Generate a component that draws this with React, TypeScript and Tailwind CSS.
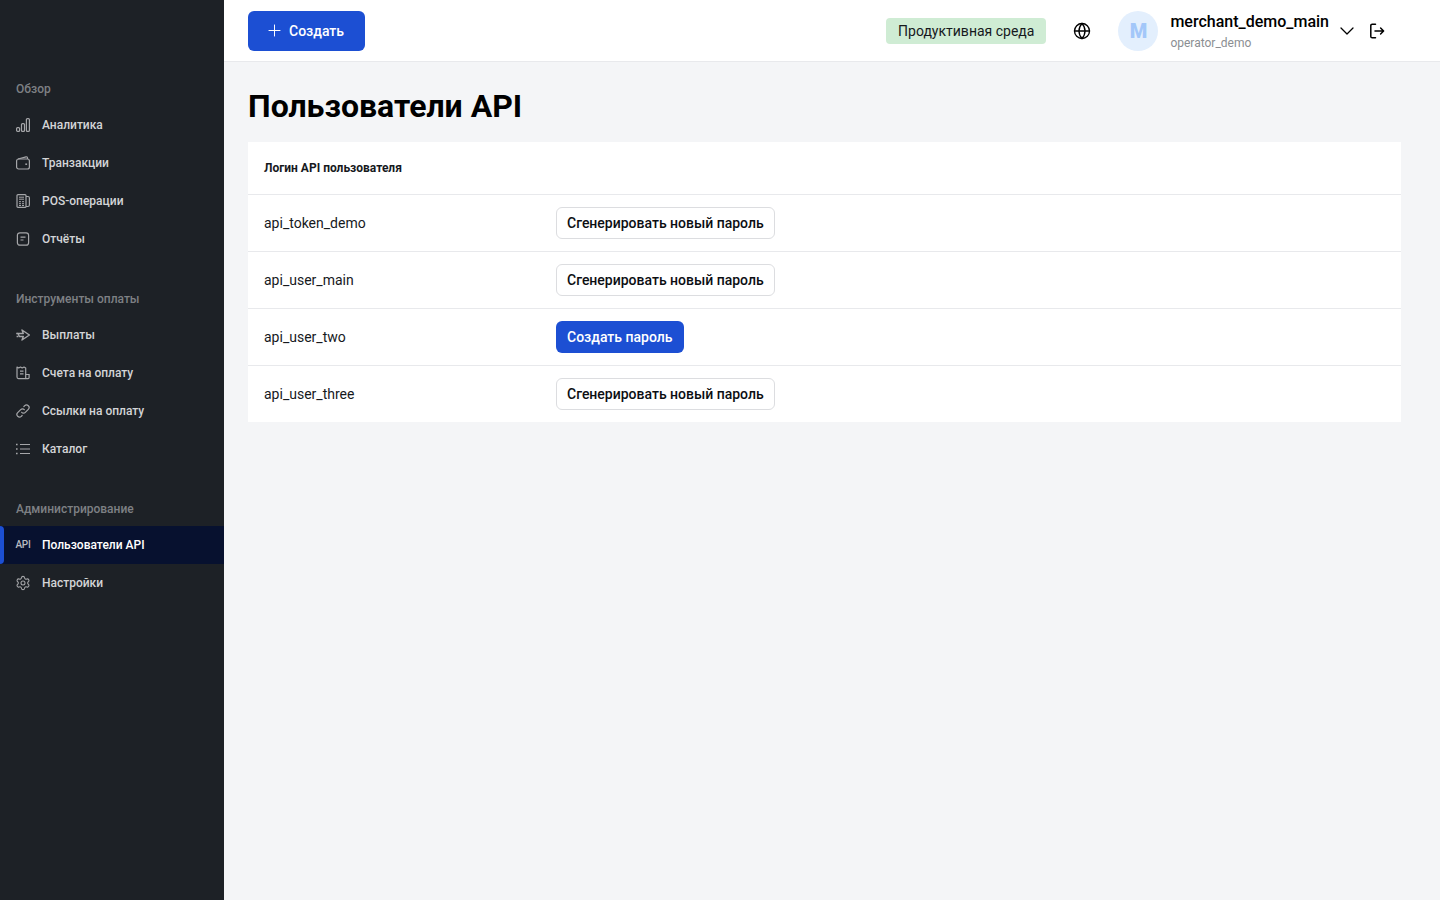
import { ChevronDown, Globe, Plus, Settings } from "lucide-react";
import type { ReactNode } from "react";

const iconProps = {
  width: 14,
  height: 14,
  viewBox: "0 0 14 14",
  fill: "none",
  stroke: "currentColor",
  strokeWidth: 1.2,
};

const BarsIcon = () => (
  <svg {...iconProps}>
    <rect x="0.6" y="9.6" width="3" height="3.8" rx="1" />
    <rect x="5.5" y="5.6" width="3" height="7.8" rx="1" />
    <rect x="10.4" y="0.6" width="3" height="12.8" rx="1" />
  </svg>
);

const WalletIcon = () => (
  <svg {...iconProps}>
    <rect x="0.6" y="3" width="12.8" height="10" rx="2" />
    <path d="M2 3l8-2.2c.8-.2 1.5.4 1.5 1.2v1" />
    <path d="M9.3 8.2h1.8" strokeWidth="1.5" />
  </svg>
);

const PosIcon = () => (
  <svg {...iconProps}>
    <rect x="1" y="0.6" width="9" height="12.8" rx="1" />
    <path d="M3 3.2h5M3 5.2h5M3 7.7h2M6 7.7h2M3 9.7h2M6 9.7h2M3 11.5h2M6 11.5h2" strokeWidth="1" />
    <path d="M10 2.5h2c.8 0 1.4.7 1.4 1.5v7c0 .8-.6 1.5-1.4 1.5h-2" />
  </svg>
);

const ReportIcon = () => (
  <svg {...iconProps}>
    <rect x="1.4" y="0.8" width="11.2" height="12.4" rx="2.5" />
    <path d="M4.5 5.2h5M4.5 8h3" />
  </svg>
);

const PayoutIcon = () => (
  <svg {...iconProps}>
    <path d="M6 2L13.4 7 6 12l1.3-3.5H3.4L2 5.5h5.3z" strokeLinejoin="round" strokeWidth="1.4" />
    <path d="M0.2 5.5H2M0.6 8.5h1.8" strokeWidth="1.4" />
  </svg>
);

const InvoiceIcon = () => (
  <svg {...iconProps}>
    <path d="M1 1l1.7 1L4.5 1l1.7 1L8 1l1.7 1v10.6H2.5c-.8 0-1.5-.7-1.5-1.5z" strokeLinejoin="round" />
    <path d="M4 5.2h3.5M4 7.8h3.5" />
    <path d="M9.7 8.5h3.4v3c0 .6-.5 1.1-1 1.1H9.7" />
  </svg>
);

const LinkIcon = () => (
  <svg {...iconProps}>
    <path d="M5.7 8.3a2.5 2.5 0 0 0 3.6 0l3-3a2.5 2.5 0 0 0-3.6-3.6l-.8.8" strokeLinecap="round" />
    <path d="M8.3 5.7a2.5 2.5 0 0 0-3.6 0l-3 3a2.5 2.5 0 0 0 3.6 3.6l.8-.8" strokeLinecap="round" />
  </svg>
);

const ListIcon = () => (
  <svg {...iconProps}>
    <path d="M4 2.5h10M4 7h10M4 11.5h10" />
    <path d="M0 2.5h1.6M0 7h1.6M0 11.5h1.6" strokeWidth="1.4" />
  </svg>
);

const LogoutIcon = () => (
  <svg width="16" height="16" viewBox="0 0 16 16" fill="none" stroke="currentColor" strokeWidth="1.5" strokeLinecap="round" strokeLinejoin="round">
    <path d="M6.5 1.2H3.2c-.8 0-1.4.6-1.4 1.4v10.8c0 .8.6 1.4 1.4 1.4h3.3" />
    <path d="M6 8h8.5M11.6 5l3 3-3 3" />
  </svg>
);

type Item = { label: string; icon: ReactNode; active?: boolean };

const sections: { title: string; items: Item[] }[] = [
  {
    title: "Обзор",
    items: [
      { label: "Аналитика", icon: <BarsIcon /> },
      { label: "Транзакции", icon: <WalletIcon /> },
      { label: "POS-операции", icon: <PosIcon /> },
      { label: "Отчёты", icon: <ReportIcon /> },
    ],
  },
  {
    title: "Инструменты оплаты",
    items: [
      { label: "Выплаты", icon: <PayoutIcon /> },
      { label: "Счета на оплату", icon: <InvoiceIcon /> },
      { label: "Ссылки на оплату", icon: <LinkIcon /> },
      { label: "Каталог", icon: <ListIcon /> },
    ],
  },
  {
    title: "Администрирование",
    items: [
      {
        label: "Пользователи API",
        icon: <span className="text-[10px] font-medium leading-none tracking-[-0.3px]">API</span>,
        active: true,
      },
      { label: "Настройки", icon: <Settings size={16} strokeWidth={1.6} className="shrink-0" /> },
    ],
  },
];

const users = [
  { login: "api_token_demo", hasPassword: true },
  { login: "api_user_main", hasPassword: true },
  { login: "api_user_two", hasPassword: false },
  { login: "api_user_three", hasPassword: true },
];

function Sidebar() {
  return (
    <aside className="w-[224px] shrink-0 bg-[#1d2126] pt-[71px]">
      {sections.map((section) => (
        <div key={section.title} className="mb-[23px]">
          <div className="flex h-[35px] items-center px-4 text-xs font-medium text-[#7d8084]">{section.title}</div>
          {section.items.map((item) => (
            <div
              key={item.label}
              className={`relative flex h-[38px] items-center gap-[12px] px-4 text-xs font-medium ${
                item.active ? "bg-[#07112f] text-white" : "text-[#d3d4d6]"
              }`}
            >
              {item.active && <span className="absolute left-0 top-0 h-full w-[4px] rounded-r-sm bg-[#1c4fd3]" />}
              <span className={`flex w-[14px] justify-center ${item.active ? "text-[#b9bbc0]" : "text-[#a5a6a9]"}`}>
                {item.icon}
              </span>
              {item.label}
            </div>
          ))}
        </div>
      ))}
    </aside>
  );
}

function Header() {
  return (
    <header className="flex h-[62px] shrink-0 items-center justify-between border-b border-[#e8e9ec] bg-white pl-6 pr-[55px]">
      <button className="flex h-[40px] w-[117px] items-center gap-[5px] rounded-md bg-[#1c4fd3] pl-[17px] text-sm font-medium text-white">
        <Plus size={19} strokeWidth={1.25} />
        Создать
      </button>
      <div className="flex items-center">
        <div className="flex h-[26px] items-center rounded bg-[#cfecd4] px-3 text-sm text-[#16191d]">Продуктивная среда</div>
        <Globe size={18} strokeWidth={1.8} className="ml-[27px] text-black" />
        <div className="ml-[27px] flex h-[40px] w-[40px] items-center justify-center rounded-full bg-[#e3effd] text-xl font-black text-[#a3c7f9]">
          M
        </div>
        <div className="ml-3 flex flex-col pt-[2px]">
          <span className="text-base font-medium leading-5 text-black">merchant_demo_main</span>
          <span className="mt-[3px] text-xs leading-4 text-[#8b8e92]">operator_demo</span>
        </div>
        <ChevronDown size={24} strokeWidth={1.25} className="ml-[6px] text-black" />
        <span className="ml-[10px] text-black">
          <LogoutIcon />
        </span>
      </div>
    </header>
  );
}

function UsersTable() {
  return (
    <div className="bg-white">
      <div className="flex h-[53px] items-center border-b border-[#e8e9ec] px-4 text-xs font-bold text-[#16191d]">
        Логин API пользователя
      </div>
      {users.map((user, i) => (
        <div
          key={user.login}
          className={`flex items-center px-4 ${i < users.length - 1 ? "h-[57px] border-b border-[#e8e9ec]" : "h-[56px]"}`}
        >
          <div className="w-[292px] text-sm text-[#16191d]">{user.login}</div>
          {user.hasPassword ? (
            <button className="h-[32px] rounded-md border border-[#dcdde0] bg-white px-[10px] text-sm font-medium text-[#0c0e12]">
              Сгенерировать новый пароль
            </button>
          ) : (
            <button className="h-[32px] rounded-md bg-[#1c4fd3] pl-[11px] pr-[12px] text-sm font-medium text-white">
              Создать пароль
            </button>
          )}
        </div>
      ))}
    </div>
  );
}

export default function App() {
  return (
    <div className="flex h-[900px] overflow-hidden bg-[#f4f5f7] font-['Roboto',sans-serif]">
      <Sidebar />
      <main className="flex min-w-0 flex-1 flex-col">
        <Header />
        <div className="pl-6 pr-[39px]">
          <h1 className="mt-[24px] mb-[16px] text-[32px] font-bold leading-10 text-black">Пользователи API</h1>
          <UsersTable />
        </div>
      </main>
    </div>
  );
}
